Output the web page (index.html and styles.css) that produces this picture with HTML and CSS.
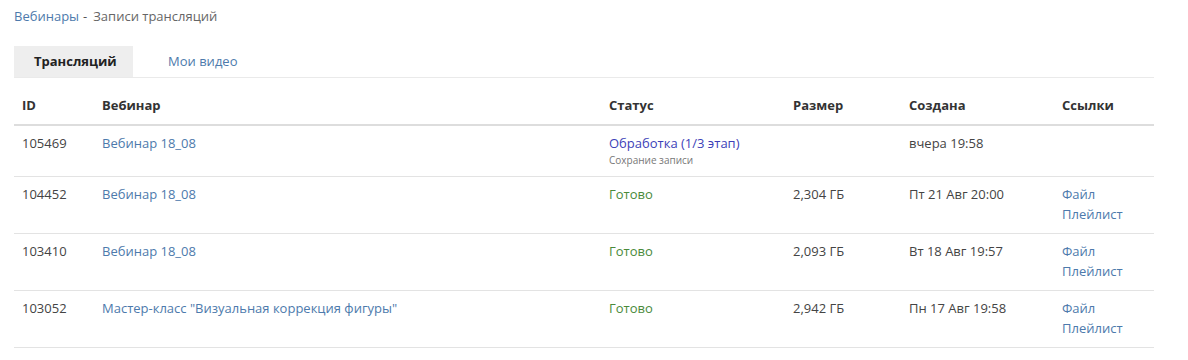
FILE: index.html
```html
<!DOCTYPE html>
<html lang="ru">
<head>
    <meta charset="UTF-8">
    <meta name="viewport" content="width=device-width, initial-scale=1.0">
    <title>Записи трансляций</title>
    <link rel="stylesheet" href="styles.css">
</head>
<body>

    <div class="page">
        <!-- Хлебные крошки -->
        <div class="breadcrumbs">
            <a href="#">Вебинары</a><span class="sep">-</span><span>Записи трансляций</span>
        </div>

        <!-- Вкладки -->
        <div class="tabs">
            <span class="tab active">Трансляций</span>
            <a href="#" class="tab">Мои видео</a>
        </div>

        <table class="records">
            <thead>
                <tr>
                    <th class="col-id">ID</th>
                    <th class="col-name">Вебинар</th>
                    <th class="col-status">Статус</th>
                    <th class="col-size">Размер</th>
                    <th class="col-date">Создана</th>
                    <th class="col-links">Ссылки</th>
                </tr>
            </thead>
            <tbody>
                <tr>
                    <td>105469</td>
                    <td><a href="#">Вебинар 18_08</a></td>
                    <td>
                        <span class="status-processing">Обработка (1/3 этап)</span>
                        <div class="status-note">Сохрание записи</div>
                    </td>
                    <td></td>
                    <td>вчера 19:58</td>
                    <td></td>
                </tr>
                <tr>
                    <td>104452</td>
                    <td><a href="#">Вебинар 18_08</a></td>
                    <td><span class="status-done">Готово</span></td>
                    <td>2,304 ГБ</td>
                    <td>Пт 21 Авг 20:00</td>
                    <td><a href="#">Файл</a><br><a href="#">Плейлист</a></td>
                </tr>
                <tr>
                    <td>103410</td>
                    <td><a href="#">Вебинар 18_08</a></td>
                    <td><span class="status-done">Готово</span></td>
                    <td>2,093 ГБ</td>
                    <td>Вт 18 Авг 19:57</td>
                    <td><a href="#">Файл</a><br><a href="#">Плейлист</a></td>
                </tr>
                <tr>
                    <td>103052</td>
                    <td><a href="#">Мастер-класс "Визуальная коррекция фигуры"</a></td>
                    <td><span class="status-done">Готово</span></td>
                    <td>2,942 ГБ</td>
                    <td>Пн 17 Авг 19:58</td>
                    <td><a href="#">Файл</a><br><a href="#">Плейлист</a></td>
                </tr>
            </tbody>
        </table>
    </div>

</body>
</html>
```

FILE: styles.css
```css
body {
    font-family: "Open Sans", Arial, sans-serif;
    font-size: 13px;
    color: #444;
    margin: 0;
    padding: 0;
    background-color: #fff;
}
a {
    color: #4d7aac;
    text-decoration: none;
}
.page {
    width: 1140px;
    padding: 6px 14px;
}
.breadcrumbs {
    line-height: 20px;
    color: #666;
}
.breadcrumbs .sep {
    color: #555;
    margin: 0 6px 0 4px;
}
.tabs {
    display: flex;
    margin-top: 20px;
    border-bottom: 1px solid #eaeaea;
}
.tab {
    display: block;
    line-height: 31px;
    padding: 0 20px;
}
.tab.active {
    background-color: #eeeeee;
    color: #222;
    font-weight: bold;
    width: 79px;
    text-align: center;
}
.tab + .tab {
    padding-left: 35px;
}
.records {
    width: 100%;
    border-collapse: collapse;
    margin-top: 10px;
}
.records th {
    text-align: left;
    font-weight: bold;
    color: #333;
    padding: 7px 8px 9px;
    line-height: 20px;
    border-bottom: 2px solid #dddddd;
}
.records td {
    vertical-align: top;
    padding: 7px 8px 9px;
    line-height: 20px;
    border-bottom: 1px solid #e3e3e3;
}
.col-id { width: 64px; }
.col-name { width: 491px; }
.col-status { width: 168px; }
.col-size { width: 100px; }
.col-date { width: 137px; }
.status-processing {
    color: #3d3fb8;
}
.status-note {
    font-size: 10px;
    line-height: 14px;
    color: #777;
}
.status-done {
    color: #4a8a3a;
}
```
